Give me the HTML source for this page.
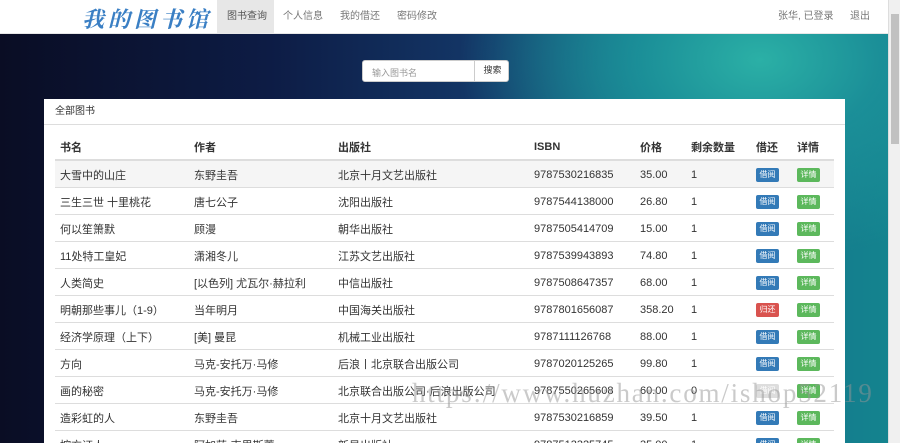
<!DOCTYPE html><html><head><meta charset="utf-8"><style>
*{margin:0;padding:0;box-sizing:border-box}
html{width:900px;height:443px;overflow:hidden}
body{width:900px;height:443px;overflow:hidden;position:relative;font-family:"Liberation Sans","Noto Sans CJK SC",sans-serif;font-size:11px;color:#333;
background:radial-gradient(ellipse 300px 200px at 760px 60px,#2bb0a6 0%,#1b8f98 40%,transparent 100%),linear-gradient(90deg,#0a0d24 0%,#0d1c45 30%,#14396a 55%,#166a88 75%,#14858f 100%);}
.sb{position:absolute;right:0;top:0;width:12px;height:443px;background:#f0f0f0;border-left:1px solid #ddd}
.sb i{position:absolute;left:2px;top:14px;width:8px;height:130px;background:#c1c1c1}
.nav{position:absolute;left:0;top:0;width:888px;height:34px;background:#fff;border-bottom:1px solid #e7e7e7}
.logo{position:absolute;left:82px;top:3px;font-family:"Noto Serif CJK SC",serif;font-size:22px;font-weight:bold;color:#3a7fc4;letter-spacing:4px;font-style:italic}
.nav a{position:absolute;top:0;height:34px;line-height:34px;color:#777;font-size:10px}
.act{background:#e7e7e7;color:#555!important}
.search{position:absolute;left:362px;top:60px;width:147px;height:22px;background:#fff;border-radius:3px;border:1px solid #ccc}
.search span{position:absolute;left:9px;top:5px;color:#999;font-size:9px}
.search b{position:absolute;left:111px;top:-1px;width:36px;height:22px;border-left:1px solid #ccc;font-weight:normal;font-size:9px;line-height:21px;text-align:center;color:#333}
.panel{position:absolute;left:44px;top:99px;width:801px;height:360px;background:#fff;border-radius:3px}
.ph{height:26px;line-height:26px;padding-left:11px;border-bottom:1px solid #ddd;font-size:10px;background:#fff}
table{position:absolute;left:11px;top:35px;width:779px;border-collapse:collapse}
th,td{text-align:left;padding:0 5px;height:27px;font-size:11px;color:#333}
th{font-weight:bold;border-bottom:2px solid #ddd;height:26px}
td{border-top:1px solid #ddd;padding-top:2px}
tr.h td{background:#f5f5f5}
.btn{display:inline-block;width:23px;height:14px;border-radius:2px;color:#fff;font-size:8px;line-height:14px;text-align:center}
.bl{background:#337ab7}.gr{background:#5cb85c}.rd{background:#d9534f}.gy{background:#ddd}
.wm{position:absolute;left:412px;top:378px;font-family:"Liberation Serif",serif;font-size:27px;color:rgba(150,150,150,.5);letter-spacing:1.8px}
</style></head><body>
<div class="nav"><div class="logo">我的图书馆</div>
<a class="act" style="left:217px;width:57px;padding-left:10px">图书查询</a>
<a style="left:283px">个人信息</a><a style="left:340px">我的借还</a><a style="left:397px">密码修改</a>
<a style="left:778px">张华, 已登录</a><a style="left:850px">退出</a></div>
<div class="search"><span>输入图书名</span><b>搜索</b></div>
<div class="panel"><div class="ph">全部图书</div>
<table>
<tr><th style="width:134px">书名</th><th style="width:144px">作者</th><th style="width:196px">出版社</th><th style="width:106px">ISBN</th><th style="width:51px">价格</th><th style="width:65px">剩余数量</th><th style="width:41px">借还</th><th>详情</th></tr>
<tr class="h"><td>大雪中的山庄</td><td>东野圭吾</td><td>北京十月文艺出版社</td><td>9787530216835</td><td>35.00</td><td>1</td><td><span class="btn bl">借阅</span></td><td><span class="btn gr">详情</span></td></tr>
<tr><td>三生三世 十里桃花</td><td>唐七公子</td><td>沈阳出版社</td><td>9787544138000</td><td>26.80</td><td>1</td><td><span class="btn bl">借阅</span></td><td><span class="btn gr">详情</span></td></tr>
<tr><td>何以笙箫默</td><td>顾漫</td><td>朝华出版社</td><td>9787505414709</td><td>15.00</td><td>1</td><td><span class="btn bl">借阅</span></td><td><span class="btn gr">详情</span></td></tr>
<tr><td>11处特工皇妃</td><td>潇湘冬儿</td><td>江苏文艺出版社</td><td>9787539943893</td><td>74.80</td><td>1</td><td><span class="btn bl">借阅</span></td><td><span class="btn gr">详情</span></td></tr>
<tr><td>人类简史</td><td>[以色列] 尤瓦尔·赫拉利</td><td>中信出版社</td><td>9787508647357</td><td>68.00</td><td>1</td><td><span class="btn bl">借阅</span></td><td><span class="btn gr">详情</span></td></tr>
<tr><td>明朝那些事儿（1-9）</td><td>当年明月</td><td>中国海关出版社</td><td>9787801656087</td><td>358.20</td><td>1</td><td><span class="btn rd">归还</span></td><td><span class="btn gr">详情</span></td></tr>
<tr><td>经济学原理（上下）</td><td>[美] 曼昆</td><td>机械工业出版社</td><td>9787111126768</td><td>88.00</td><td>1</td><td><span class="btn bl">借阅</span></td><td><span class="btn gr">详情</span></td></tr>
<tr><td>方向</td><td>马克-安托万·马修</td><td>后浪丨北京联合出版公司</td><td>9787020125265</td><td>99.80</td><td>1</td><td><span class="btn bl">借阅</span></td><td><span class="btn gr">详情</span></td></tr>
<tr><td>画的秘密</td><td>马克-安托万·马修</td><td>北京联合出版公司·后浪出版公司</td><td>9787550265608</td><td>60.00</td><td>0</td><td><span class="btn gy">借阅</span></td><td><span class="btn gr">详情</span></td></tr>
<tr><td>造彩虹的人</td><td>东野圭吾</td><td>北京十月文艺出版社</td><td>9787530216859</td><td>39.50</td><td>1</td><td><span class="btn bl">借阅</span></td><td><span class="btn gr">详情</span></td></tr>
<tr><td>控方证人</td><td>阿加莎·克里斯蒂</td><td>新星出版社</td><td>9787513325745</td><td>35.00</td><td>1</td><td><span class="btn bl">借阅</span></td><td><span class="btn gr">详情</span></td></tr>
</table></div>
<div class="wm">https://www.huzhan.com/ishop52119</div>
<div class="sb"><i></i></div>
</body></html>
